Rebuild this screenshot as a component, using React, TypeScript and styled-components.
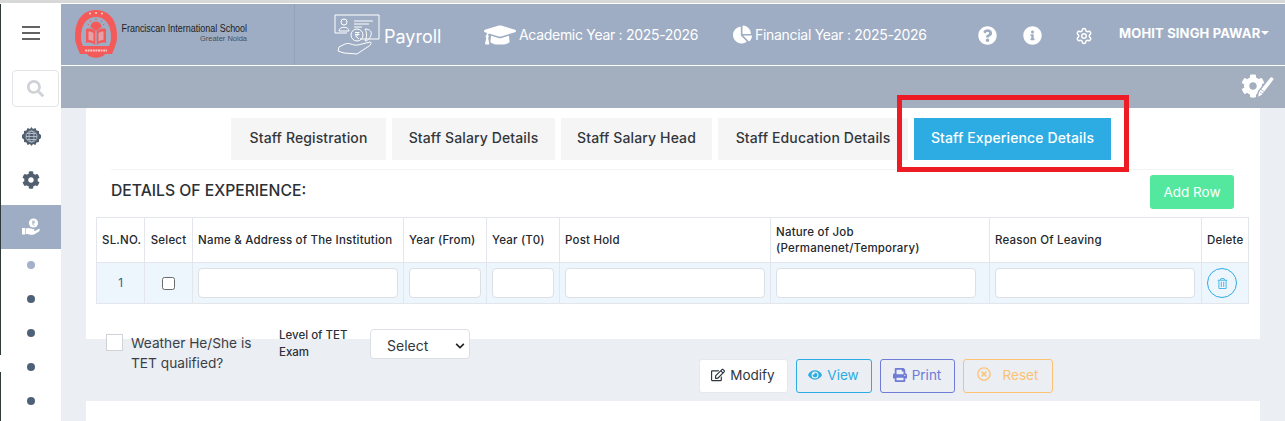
import React from "react";
import styled, { createGlobalStyle } from "styled-components";
import { FaSearch, FaCog, FaGraduationCap, FaChartPie, FaQuestionCircle, FaInfoCircle, FaRegEdit, FaEye, FaPrint, FaRegTimesCircle, FaRegTrashAlt, FaChevronDown } from "react-icons/fa";
import { Settings } from "lucide-react";

const Global = createGlobalStyle`
  html, body { margin: 0; padding: 0; background: #fff; overflow: hidden; }
  body { font-family: Inter, "Liberation Sans", sans-serif; color: #2c3036; }
  * { box-sizing: border-box; }
`;

const Page = styled.div`
  width: 1285px; height: 421px; overflow: hidden; position: relative;
  display: grid; grid-template-columns: 61px 1fr;
  padding-top: 4px;
  background: linear-gradient(#d8d8d8, #d8d8d8) top/100% 3px no-repeat, #fff;
`;
const Side = styled.aside`
  display: flex; flex-direction: column; align-items: center; background: #fff;
  border-left: 1px solid #2f3a3a; position: relative;
`;
const Burger = styled.div`
  height: 57px; display: flex; align-items: center; justify-content: center; width: 100%;
`;
const SearchBox = styled.div`
  width: 47px; height: 37px; margin: 9px 0 0 8px; border: 1px solid #e2e4e8; border-radius: 4px;
  display: flex; align-items: center; justify-content: center; color: #cfd2d6; font-size: 17px;
`;
const SideIcon = styled.div`
  height: 43px; width: 100%; display: flex; align-items: center; justify-content: center; color: #525f6e; font-size: 18px;
`;
const Icons = styled.div`
  padding-top: 8px; width: 100%;
`;
const ActiveIcon = styled.div`
  height: 44px; width: 100%; margin-top: 4px; background: #9fadc4; color: #fff;
  display: flex; align-items: center; justify-content: center;
`;
const Dots = styled.div`
  display: flex; flex-direction: column; gap: 26px; padding-top: 12px;
`;
const Dot = styled.span<{ $light?: boolean }>`
  width: 8px; height: 8px; border-radius: 50%; background: ${p => (p.$light ? "#a3b1c9" : "#4f6079")};
`;
const Main = styled.main`
  display: flex; flex-direction: column; background: #ebeef3; min-width: 0;
`;
const Header = styled.header`
  height: 62px; background: #9eadc4; display: flex; align-items: center; color: #fff; border-bottom: 1px solid #fff;
`;
const Brand = styled.div`
  width: 234px; height: 100%; border-right: 1px solid #93a2b9; display: flex; align-items: center; padding-left: 14px;
`;
const BrandText = styled.div`
  margin-left: 5px; margin-top: -5px; width: 125px; flex: none; overflow: visible;
  display: flex; flex-direction: column; align-items: flex-end; color: #1d1d1f;
`;
const BrandName = styled.div`
  font: 400 11.5px/13px "Liberation Sans", sans-serif; white-space: nowrap; transform: scaleX(0.78); transform-origin: right center;
`;
const BrandSub = styled.div`
  font: 400 7.5px/8px "Liberation Sans", sans-serif; color: #4a4f58;
`;
const Module = styled.div`
  display: flex; align-items: center; margin-left: 39px; width: 150px; gap: 4px;
`;
const ModuleName = styled.span`
  font-size: 18px; font-weight: 400; font-family: Inter, sans-serif; margin-top: 3px;
`;
const Year = styled.div<{ $w: number }>`
  display: flex; align-items: center; gap: 3px; width: ${p => p.$w}px; font-size: 14px; white-space: nowrap; letter-spacing: -0.3px; font-weight: 400;
`;
const HeadIcon = styled.div<{ $w: number }>`
  width: ${p => p.$w}px; display: flex; justify-content: center; font-size: 19px; margin-top: 2px;
`;
const UserName = styled.div`
  font-size: 13px; font-weight: 700; margin-left: 5px; letter-spacing: 0.15px; white-space: nowrap; display: flex; align-items: center; gap: 1px; margin-top: -3px;
`;
const Caret = styled.span`
  width: 0; height: 0; border: 4px solid transparent; border-top-color: #fff; border-bottom: 0;
`;
const SubBar = styled.div`
  height: 42px; background: #a3aebf; display: flex; justify-content: flex-end; align-items: center; padding-right: 10px; padding-bottom: 3px; color: #fff;
`;
const Content = styled.div`
  padding: 0 25px; display: flex; flex-direction: column; flex: 1;
`;
const Card = styled.section`
  background: #fff; height: 231px; padding-top: 10px; display: flex; flex-direction: column; align-items: stretch;
`;
const Tabs = styled.nav`
  display: flex; gap: 6px; padding-left: 145px; height: 42px;
`;
const Tab = styled.div<{ $w: number; $active?: boolean }>`
  width: ${p => p.$w}px; display: flex; align-items: center; justify-content: center; padding-bottom: 3px;
  background: ${p => (p.$active ? "#2dabe3" : "#f5f5f5")}; color: ${p => (p.$active ? "#fff" : "#33373c")};
  font-size: 14px; font-weight: 500; white-space: nowrap; letter-spacing: 0.12px;
`;
const TitleRow = styled.div`
  margin: 9px 26px 0 25px; border-top: 1px solid #f2f3f5; height: 48px; padding-top: 5px;
  display: flex; justify-content: space-between; align-items: flex-start;
`;
const Title = styled.h3`
  margin: 6px 0 0; font-size: 15.7px; font-weight: 500; color: #2b3036;
`;
const AddRow = styled.button`
  width: 84px; height: 34px; border: 0; border-radius: 3px; background: #53e89e; color: #fff; font: 400 13.5px Inter, sans-serif;
`;
const Table = styled.table`
  margin-left: 10px; width: 1152px; border-collapse: collapse; table-layout: fixed; font-size: 11.5px;
  th, td { border: 1px solid #e3e6ea; padding: 0 5px; }
`;
const Th = styled.th<{ $center?: boolean }>`
  height: 45px; font-weight: 500; text-align: ${p => (p.$center ? "center" : "left")}; color: #24282e; line-height: 16px; letter-spacing: 0.2px;
  white-space: nowrap;
`;
const Td = styled.td<{ $center?: boolean }>`
  height: 41px; background: #eef6fd; text-align: ${p => (p.$center ? "center" : "left")}; color: #2a5d8a;
`;
const TextInput = styled.input<{ $max?: number }>`
  width: 100%; max-width: ${p => (p.$max ? `${p.$max}px` : "none")}; height: 30px; border: 1px solid #dcdfe4; border-radius: 4px; background: #fff; display: block;
`;
const Check = styled.span`
  display: inline-block; width: 13px; height: 13px; border: 1px solid #6a6a6a; border-radius: 2.5px; background: #fff; vertical-align: middle;
`;
const TrashBtn = styled.span`
  width: 30px; height: 30px; border: 1px solid #2dabe3; border-radius: 50%; display: flex; align-items: center; justify-content: center; color: #4db8e8; font-size: 11px;
`;
const FormRow = styled.div`
  display: flex; align-items: flex-start; margin-top: -10px; padding-left: 20px; height: 30px;
`;
const BigCheck = styled.span`
  width: 17px; height: 17px; border: 1px solid #cfd3d8; background: #fff; margin-top: 5px; flex: none;
`;
const CheckLabel = styled.div`
  margin-left: 8px; width: 148px; font-size: 13.7px; line-height: 20px; margin-top: 4px; color: #3a3f46;
`;
const LevelLabel = styled.div`
  width: 91px; font-size: 11.5px; font-weight: 500; line-height: 17px; margin-top: -2px; color: #2c3036;
`;
const SelectBox = styled.div`
  width: 100px; height: 30px; background: #fff; border: 1px solid #dcdfe4; border-radius: 4px; display: flex; align-items: center; justify-content: space-between;
  padding: 3px 4px 0 16px; font-size: 14px; color: #33373c;
`;
const Actions = styled.div`
  display: flex; gap: 8px; padding-left: 613px; height: 42px; align-items: flex-start;
`;
const Btn = styled.button<{ $w: number; $c: string; $bg?: string; $bc?: string }>`
  width: ${p => p.$w}px; height: 34px; border-radius: 3px; border: 1px solid ${p => p.$bc || p.$c}; color: ${p => p.$c}; background: ${p => p.$bg || "transparent"};
  font: 400 13.5px Inter, sans-serif; display: flex; align-items: center; justify-content: center; gap: 5px; padding: 0 1px 2px 0;
  svg { font-size: 14px; }
`;
const Bottom = styled.div`
  background: #fff; flex: 1;
`;
const Highlight = styled.div`
  position: absolute; left: 897px; top: 95px; width: 232px; height: 77px; border: 5px solid #ed1c24; pointer-events: none;
`;
const LeftGap = styled.div`
  position: absolute; left: 0; top: 355px; width: 1px; height: 17px; background: #fff;
`;

const MenuIcon = () => (
  <svg width="18" height="14" viewBox="0 0 18 14"><path d="M0 1 H18 M0 7 H18 M0 13 H18" stroke="#636363" strokeWidth="2" /></svg>
);
const Logo = () => (
  <svg width="42" height="49" viewBox="0 0 42 49" style={{ flex: "none" }}>
    <path d="M0 26 C0 9 9 0 21 0 C33 0 42 9 42 26 C42 33 40 37 38 39 H4 C2 37 0 33 0 26Z" fill="#f45a5a" />
    <path d="M6 27 C6 14 12 7 21 7 C30 7 36 14 36 27 C36 31 35 34 34 36 H8 C7 34 6 31 6 27Z" fill="#9eadc4" />
    <path d="M15.5 17 A5.5 5.5 0 0 1 26.5 17 L21 21Z" fill="#f45a5a" />
    <path d="M21 8.5 V10 M15 10.5 L16 12 M27 10.5 L26 12 M12.5 14 L14 15 M29.5 14 L28 15" stroke="#f45a5a" strokeWidth="1" />
    <path d="M11 19 C15 18 18 19 20.3 21 V35 C18 33 15 32 11 33Z M31 19 C27 18 24 19 21.7 21 V35 C24 33 27 32 31 33Z" fill="#f45a5a" />
    <path d="M13.5 21.5 C15.5 21.3 17 22 18.5 23 V31.5 C17 30.5 15.5 30 13.5 30Z M28.5 21.5 C26.5 21.3 25 22 23.5 23 V31.5 C25 30.5 26.5 30 28.5 30Z" fill="#d8dde6" opacity=".55" />
    <path d="M2 37 H40 L37 44 H5Z" fill="#f45a5a" />
    <path d="M12 44 H30 C27 49 15 49 12 44Z" fill="#f45a5a" />
    <path d="M10 40.5 H32" stroke="#f9c5c5" strokeWidth="2" strokeDasharray="2 .6" />
    <circle cx="15" cy="3.5" r="1" fill="#f9d0d0" /><circle cx="21" cy="3" r="1" fill="#f9d0d0" /><circle cx="27" cy="3.5" r="1" fill="#f9d0d0" />
  </svg>
);
const PayrollIcon = () => (
  <svg width="46" height="42" viewBox="0 0 46 42" fill="none" stroke="#fff" strokeWidth="1">
    <path d="M26 25 H45 V1 H1 V19 H13" />
    <circle cx="10" cy="8" r="3" /><path d="M5 17 C5 12 15 12 15 17 Z" />
    <path d="M20 7 H39 M20 10 H35 M20 13 H28" />
    <circle cx="23" cy="21" r="6" /><path d="M21 18.5 H25.5 M21 20.5 H25.5 M22 18.5 C25 19 25 22 21.5 22 L25 25" />
    <path d="M31 15 C36 15 38 18 37 21 C36 25 33 27 31 27 C33 24 33 18 31 15Z" />
    <path d="M5 33 L11 30 C15 28 19 32 24 31 L36 28 C38 28 37 31 35 32 L23 40 L10 39 L4 37 Z" />
  </svg>
);
const GlobeGear = () => (
  <svg width="19" height="19" viewBox="0 0 19 19">
    <path d="M9.5 0 L11 2 L13.5 1 L14.5 3.5 L17 4 L17 6.5 L19 8 V11 L17 12.5 L17 15 L14.5 15.5 L13.5 18 L11 17 L9.5 19 L8 17 L5.5 18 L4.5 15.5 L2 15 L2 12.5 L0 11 V8 L2 6.5 L2 4 L4.5 3.5 L5.5 1 L8 2Z" fill="#525f6e" />
    <g fill="none" stroke="#b8c2cf" strokeWidth=".9"><circle cx="9.5" cy="9.5" r="5.5" /><ellipse cx="9.5" cy="9.5" rx="2.5" ry="5.5" /><path d="M4 9.5 H15 M5 6.5 H14 M5 12.5 H14" /></g>
  </svg>
);
const HandCoin = () => (
  <svg width="18" height="18" viewBox="0 0 18 18">
    <circle cx="11.5" cy="5" r="4.6" fill="#fff" />
    <path d="M10 3.2 H13 M10 4.6 H13 M10.5 3.2 C12.5 3.4 12.5 5.8 10.2 5.8 L12.6 7.6" fill="none" stroke="#9fadc4" strokeWidth=".7" />
    <rect x="0" y="10" width="3.4" height="6.5" fill="#fff" />
    <path d="M4 10.5 C7 9 9 11 12 11 C13 11.5 12.5 13 11 13 H8.5 L13 13 L17 10.8 C18 11 18 12.5 17 13.4 L12 16.5 C9 17.3 7 16 4 16Z" fill="#fff" />
  </svg>
);
const GearPen = () => (
  <svg width="34" height="26" viewBox="0 0 34 26">
    <g transform="translate(0 1)"><FaCog size={24} color="#fff" /></g>
    <path d="M16 25 L17.5 18.5 L29 4 C30.5 2.4 34.2 5 33 7 L21.5 22 Z" fill="#fff" stroke="#a3aebf" strokeWidth="1.4" />
    <path d="M19 19 L23 21.5 M20 16.5 L25 20" stroke="#a3aebf" strokeWidth=".8" />
  </svg>
);

const headers: { label: React.ReactNode; w: number; center?: boolean }[] = [
  { label: "SL.NO.", w: 48, center: true },
  { label: "Select", w: 48, center: true },
  { label: "Name & Address of The Institution", w: 211 },
  { label: "Year (From)", w: 83 },
  { label: "Year (T0)", w: 73 },
  { label: "Post Hold", w: 211 },
  { label: <>Nature of Job<br />(Permanenet/Temporary)</>, w: 219 },
  { label: "Reason Of Leaving", w: 212 },
  { label: "Delete", w: 47, center: true },
];

export default function App() {
  return (
    <>
      <Global />
      <Page>
        <Side>
          <Burger><MenuIcon /></Burger>
          <SearchBox><FaSearch /></SearchBox>
          <Icons>
            <SideIcon><GlobeGear /></SideIcon>
            <SideIcon><FaCog /></SideIcon>
          </Icons>
          <ActiveIcon><HandCoin /></ActiveIcon>
          <Dots>
            <Dot $light /><Dot /><Dot /><Dot /><Dot />
          </Dots>
        </Side>
        <Main>
          <Header>
            <Brand>
              <Logo />
              <BrandText>
                <BrandName>Franciscan International School</BrandName>
                <BrandSub>Greater Noida</BrandSub>
              </BrandText>
            </Brand>
            <Module>
              <PayrollIcon />
              <ModuleName>Payroll</ModuleName>
            </Module>
            <Year $w={249}><FaGraduationCap size={32} />Academic Year : 2025-2026</Year>
            <Year $w={231}><FaChartPie size={19} />Financial Year : 2025-2026</Year>
            <HeadIcon $w={46}><FaQuestionCircle /></HeadIcon>
            <HeadIcon $w={44}><FaInfoCircle /></HeadIcon>
            <HeadIcon $w={60}><Settings size={18} /></HeadIcon>
            <UserName>MOHIT SINGH PAWAR<Caret /></UserName>
          </Header>
          <SubBar><GearPen /></SubBar>
          <Content>
            <Card>
              <Tabs>
                <Tab $w={155}>Staff Registration</Tab>
                <Tab $w={163}>Staff Salary Details</Tab>
                <Tab $w={151}>Staff Salary Head</Tab>
                <Tab $w={190}>Staff Education Details</Tab>
                <Tab $w={197} $active>Staff Experience Details</Tab>
              </Tabs>
              <TitleRow>
                <Title>DETAILS OF EXPERIENCE:</Title>
                <AddRow>Add Row</AddRow>
              </TitleRow>
              <Table>
                <colgroup>{headers.map((h, i) => <col key={i} style={{ width: h.w }} />)}</colgroup>
                <thead>
                  <tr>{headers.map((h, i) => <Th key={i} $center={h.center}>{h.label}</Th>)}</tr>
                </thead>
                <tbody>
                  <tr>
                    <Td $center>1</Td>
                    <Td $center><Check /></Td>
                    <Td><TextInput /></Td>
                    <Td><TextInput /></Td>
                    <Td><TextInput /></Td>
                    <Td><TextInput /></Td>
                    <Td><TextInput $max={200} /></Td>
                    <Td><TextInput $max={200} /></Td>
                    <Td><TrashBtn><FaRegTrashAlt /></TrashBtn></Td>
                  </tr>
                </tbody>
              </Table>
            </Card>
            <FormRow>
              <BigCheck />
              <CheckLabel>Weather He/She is TET qualified?</CheckLabel>
              <LevelLabel>Level of TET Exam</LevelLabel>
              <SelectBox>Select<FaChevronDown size={10} color="#222" /></SelectBox>
            </FormRow>
            <Actions>
              <Btn $w={89} $c="#2f3640" $bg="#fff" $bc="#e6e8ec"><FaRegEdit />Modify</Btn>
              <Btn $w={76} $c="#2dabe3"><FaEye />View</Btn>
              <Btn $w={75} $c="#6f7bd6"><FaPrint />Print</Btn>
              <Btn $w={90} $c="#fcc274"><FaRegTimesCircle style={{ marginRight: 7, marginTop: -3 }} />Reset</Btn>
            </Actions>
            <Bottom />
          </Content>
        </Main>
        <Highlight />
        <LeftGap />
      </Page>
    </>
  );
}
